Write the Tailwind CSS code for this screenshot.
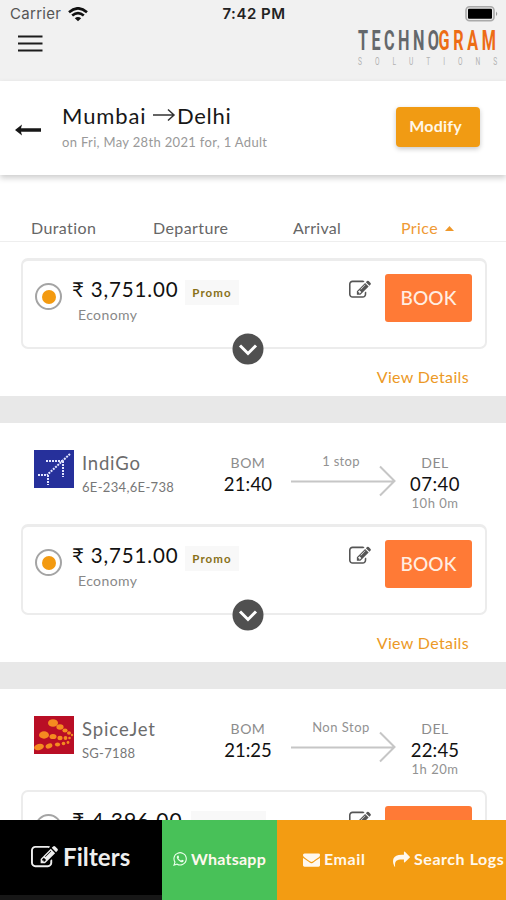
<!DOCTYPE html>
<html lang="en">
<head>
<meta charset="utf-8">
<title>Flights Mumbai to Delhi</title>
<script src="https://cdn.jsdelivr.net/npm/@tailwindcss/browser@4"></script>
</head>
<body class="w-[506px] h-[900px] overflow-hidden bg-white font-[Lato,'Noto_Sans',sans-serif]">
<svg class="hidden">
  <symbol id="edit" viewBox="0 0 1792 1792"><path d="M888 1184l116-116-152-152-116 116v56h96v96h56zm440-720q-16-16-33 1l-350 350q-17 17-1 33t33-1l350-350q17-17 1-33zm80 594v190q0 119-84.5 203.5t-203.5 84.5h-832q-119 0-203.5-84.5t-84.5-203.5v-832q0-119 84.5-203.5t203.5-84.5h832q63 0 117 25 15 7 18 23 3 17-9 29l-49 49q-14 14-32 8-23-6-45-6h-832q-66 0-113 47t-47 113v832q0 66 47 113t113 47h832q66 0 113-47t47-113v-126q0-13 9-22l64-64q15-15 35-7t20 29zm-96-738l288 288-672 672h-288v-288zm444 132l-92 92-288-288 92-92q28-28 68-28t68 28l152 152q28 28 28 68t-28 68z"/></symbol>
  <symbol id="longarrow" viewBox="0 0 106 32"><path d="M0 16.500H103M89 1.500L103.500 16L89 30.500" fill="none" stroke="#c6c6c6" stroke-width="2"/></symbol>
</svg>
<div class="flex h-[900px] flex-col">
  <main class="h-[820px] shrink-0 overflow-hidden">
    <header class="h-[81px] bg-[#f1f1f1]">
      <div class="grid h-[28px] grid-cols-3 items-center pl-[10px] pr-[8px] font-[Inter,sans-serif] text-[15px] text-[#333]">
        <div class="flex items-center gap-[6px]"><span class="w-[52px] text-[15px] text-[#555] tracking-[0.3px]">Carrier</span>
          <svg class="h-[15px] w-[20px]" viewBox="0 0 20 15" fill="none" stroke="#111" stroke-width="2.600"><path d="M1 5.200Q10-2.600 19 5.200M4.200 8.600Q10 3.600 15.800 8.600"/><path d="M10 14.300L6.800 11.200Q10 8.600 13.200 11.200Z" fill="#111" stroke="none"/></svg>
        </div>
        <span class="pt-px text-center font-semibold tracking-[0.5px] text-[#222]">7:42 PM</span>
        <svg class="ml-auto h-[16px] w-[33px]" viewBox="0 0 33 16"><rect x="1" y=".8" width="28" height="14" rx="3.500" fill="#e8e8e8" stroke="#aaa" stroke-width="1.600"/><rect x="3" y="2.800" width="24" height="10" rx="1" fill="#000"/><path d="M31 5.500q2.500 2.300 0 4.600z" fill="#999"/></svg>
      </div>
      <div class="flex justify-between pl-[18px] pr-[10px]">
        <svg class="mt-[7px] h-[18px] w-[25px]" viewBox="0 0 25 18"><path d="M0 1.500H24.500M0 8.500H24.500M0 15.500H24.500" stroke="#1c1c1c" stroke-width="2.200"/></svg>
        <svg class="h-[42px] w-[138px] overflow-visible font-[Roboto,sans-serif]" viewBox="0 0 138 42">
          <g transform="scale(.6 1)" font-size="27" font-weight="700"><text x="0" y="22" textLength="135" fill="#64686b">TECHNO</text><text x="134" y="22" textLength="96" fill="#ed6c15">GRAM</text></g>
          <g transform="scale(.6 1)"><text x="0" y="37.500" font-size="11" textLength="232" fill="#b2b2b2">SOLUTIONS</text></g>
        </svg>
      </div>
    </header>
    <section class="relative flex h-[94px] items-start bg-white pl-[15px] pr-[26px] shadow-[0_3px_6px_rgba(0,0,0,0.2)]">
      <svg class="mt-[43px] h-[12px] w-[27px]" viewBox="0 0 27 12"><path d="M0 6L7 .5L6 4.300H26V7.800H6L7 11.500Z" fill="#171717"/></svg>
      <div class="ml-[20px] pt-[20px] whitespace-nowrap">
        <h1 class="flex h-[28px] items-center text-[22px] text-[#171717]"><span class="w-[90px] tracking-[0.9px]">Mumbai</span><svg class="mr-px h-[14px] w-[24px]" viewBox="0 0 24 14" fill="none" stroke="#333" stroke-width="1.500"><path d="M1 7H22M16 1.500L22 7L16 12.500"/></svg><span class="tracking-[0.7px]">Delhi</span></h1>
        <p class="mt-[3px] text-[13px] leading-[20px] tracking-[0.33px] text-[#999]">on Fri, May 28th 2021 for, 1 Adult</p>
      </div>
      <button class="ml-auto mt-[26px] h-[40px] w-[84px] rounded-[4px] bg-[#f19b13] pb-[2px] pr-[5px] text-[16px] font-bold tracking-[0.2px] text-[#fff7e8] shadow-[0_2px_5px_rgba(0,0,0,0.22)]">Modify</button>
    </section>
    <nav class="flex h-[67px] items-end border-b border-[#eee] pb-[2px] pl-[31px] text-[16px] leading-[22px] text-[#666]">
      <span class="w-[122px] tracking-[0.4px]">Duration</span><span class="w-[140px] tracking-[0.4px]">Departure</span><span class="w-[108px] tracking-[0.3px]">Arrival</span>
      <span class="flex items-center gap-[7px] tracking-[0.4px] text-[#ef9a35]">Price <svg class="h-[5px] w-[9px]" viewBox="0 0 9 5"><path d="M4.500 0L9 5H0Z" fill="#ef982a"/></svg></span>
    </nav>

    <section class="h-[154px] pt-[16px]">
      <div class="relative ml-[21px] mr-[19px] flex h-[91px] rounded-[7px] border-2 border-t-[3px] border-[#ececec] pl-[13px] pr-[13px]">
        <span class="-ml-px mt-[22px] flex size-[27px] items-center justify-center rounded-full border-2 border-[#a4a4a4]"><i class="size-[14px] rounded-full bg-[#f39a10]"></i></span>
        <div class="ml-[10px] pt-[14px]">
          <div class="flex h-[28px] items-center"><span class="w-[112px] whitespace-nowrap text-[20.500px] font-normal tracking-[0.85px] text-[#111]">₹ 3,751.00</span><span class="ml-px mt-[6px] h-[25px] w-[54px] bg-[#f8f8f8] text-center text-[11.500px] font-bold leading-[26px] tracking-[1.1px] text-[#887018]">Promo</span></div>
          <div class="ml-[6px] text-[14px] leading-[23px] tracking-[0.4px] text-[#888]">Economy</div>
        </div>
        <svg class="ml-auto mt-[18px] h-[22px] w-[22px] fill-[#555]"><use href="#edit"/></svg>
        <button class="ml-[14px] mt-[13px] h-[48px] w-[87px] rounded-[3px] bg-[#ff7a36] text-[19px] font-medium tracking-[0.1px] text-[#ffeee2]">BOOK</button>
        <svg class="absolute left-[209px] top-[72px] size-[32px]" viewBox="0 0 32 32"><circle cx="16" cy="16" r="15.500" fill="#505050"/><path d="M8 12.500L16 20.500L24 12.500" fill="none" stroke="#fff" stroke-width="3"/></svg>
      </div>
      <a class="mt-[17px] block pr-[37px] text-right text-[16px] leading-[22px] tracking-[0.35px] text-[#ec9926]">View Details</a>
    </section>
    <div class="h-[27px] bg-[#e8e8e8]"></div>

    <section class="h-[239px]">
      <div class="flex h-[101px] pl-[34px]">
        <svg class="mt-[27px] h-[38px] w-[40px]" viewBox="0 0 40 38"><rect width="40" height="38" fill="#26309b"/><g fill="none" stroke="#e2e5ff" stroke-width="2" stroke-dasharray="2 1"><path d="M36 4L13 25M12 11H29M29 11V27M4 25H14M14 25V35"/></g></svg>
        <div class="ml-[8px] w-[120px] pt-[27px]"><div class="text-[18.500px] leading-[26px] tracking-[0.8px] text-[#6c6c6c]">IndiGo</div><div class="mt-[2px] whitespace-nowrap text-[13px] leading-[19px] tracking-[0.32px] text-[#777]">6E-234,6E-738</div></div>
        <div class="ml-[12px] w-[68px] pt-[29px] text-center"><div class="text-[14px] leading-[22px] tracking-[0.5px] text-[#8c8c8c]">BOM</div><div class="text-[18.500px] leading-[21px] tracking-[0.2px] text-[#111]">21:40</div></div>
        <div class="ml-[9px] w-[106px] pt-[28px]"><div class="pr-[6px] text-center text-[13px] leading-[20px] tracking-[0.3px] text-[#929292]">1 stop</div><svg class="-mt-[6px] h-[32px] w-[106px]"><use href="#longarrow"/></svg></div>
        <div class="ml-[3px] w-[70px] pt-[29px] text-center"><div class="text-[14px] leading-[22px] tracking-[0.5px] text-[#8c8c8c]">DEL</div><div class="text-[18.500px] leading-[21px] tracking-[0.5px] text-[#111]">07:40</div><div class="text-[13px] leading-[16px] tracking-[0.5px] text-[#929292]">10h 0m</div></div>
      </div>
      <div class="relative ml-[21px] mr-[19px] flex h-[91px] rounded-[7px] border-2 border-t-[3px] border-[#ececec] pl-[13px] pr-[13px]">
        <span class="-ml-px mt-[22px] flex size-[27px] items-center justify-center rounded-full border-2 border-[#a4a4a4]"><i class="size-[14px] rounded-full bg-[#f39a10]"></i></span>
        <div class="ml-[10px] pt-[14px]">
          <div class="flex h-[28px] items-center"><span class="w-[112px] whitespace-nowrap text-[20.500px] font-normal tracking-[0.85px] text-[#111]">₹ 3,751.00</span><span class="ml-px mt-[6px] h-[25px] w-[54px] bg-[#f8f8f8] text-center text-[11.500px] font-bold leading-[26px] tracking-[1.1px] text-[#887018]">Promo</span></div>
          <div class="ml-[6px] text-[14px] leading-[23px] tracking-[0.4px] text-[#888]">Economy</div>
        </div>
        <svg class="ml-auto mt-[18px] h-[22px] w-[22px] fill-[#555]"><use href="#edit"/></svg>
        <button class="ml-[14px] mt-[13px] h-[48px] w-[87px] rounded-[3px] bg-[#ff7a36] text-[19px] font-medium tracking-[0.1px] text-[#ffeee2]">BOOK</button>
        <svg class="absolute left-[209px] top-[72px] size-[32px]" viewBox="0 0 32 32"><circle cx="16" cy="16" r="15.500" fill="#505050"/><path d="M8 12.500L16 20.500L24 12.500" fill="none" stroke="#fff" stroke-width="3"/></svg>
      </div>
      <a class="mt-[17px] block pr-[37px] text-right text-[16px] leading-[22px] tracking-[0.35px] text-[#ec9926]">View Details</a>
    </section>
    <div class="h-[27px] bg-[#e8e8e8]"></div>

    <section class="h-[239px]">
      <div class="flex h-[101px] pl-[34px]">
        <svg class="mt-[27px] h-[38px] w-[40px]" viewBox="0 0 40 38"><rect width="40" height="38" fill="#b90e25"/><g fill="#f58b20"><ellipse cx="19" cy="7" rx="5" ry="3.800"/><ellipse cx="26" cy="11" rx="3.600" ry="2.800"/><ellipse cx="31" cy="14.500" rx="2.600" ry="2"/><ellipse cx="35" cy="17" rx="2" ry="1.700"/><circle cx="38" cy="19" r="1.200"/><ellipse cx="10" cy="19" rx="5" ry="3.700"/><ellipse cx="19" cy="20.500" rx="3.500" ry="2.600"/><ellipse cx="26" cy="22" rx="2.600" ry="2.200"/><circle cx="31.500" cy="22" r="1.900"/><circle cx="35.500" cy="22" r="1.300"/><ellipse cx="5" cy="31" rx="5" ry="3" transform="rotate(-15 5 31)"/><ellipse cx="15" cy="30" rx="3.500" ry="2.400" transform="rotate(-20 15 30)"/><ellipse cx="23.500" cy="28.500" rx="2.600" ry="2"/><circle cx="29.500" cy="27.500" r="1.800"/><circle cx="34" cy="26.500" r="1.400"/></g></svg>
        <div class="ml-[8px] w-[120px] pt-[27px]"><div class="text-[18.500px] leading-[26px] tracking-[0.9px] text-[#6c6c6c]">SpiceJet</div><div class="mt-[2px] whitespace-nowrap text-[13px] leading-[19px] tracking-[0.25px] text-[#777]">SG-7188</div></div>
        <div class="ml-[12px] w-[68px] pt-[29px] text-center"><div class="text-[14px] leading-[22px] tracking-[0.5px] text-[#8c8c8c]">BOM</div><div class="text-[18.500px] leading-[21px] tracking-[0px] text-[#111]">21:25</div></div>
        <div class="ml-[9px] w-[106px] pt-[28px]"><div class="pr-[6px] text-center text-[13px] leading-[20px] tracking-[0.5px] text-[#929292]">Non Stop</div><svg class="-mt-[6px] h-[32px] w-[106px]"><use href="#longarrow"/></svg></div>
        <div class="ml-[3px] w-[70px] pt-[29px] text-center"><div class="text-[14px] leading-[22px] tracking-[0.5px] text-[#8c8c8c]">DEL</div><div class="text-[18.500px] leading-[21px] tracking-[0.2px] text-[#111]">22:45</div><div class="text-[13px] leading-[16px] tracking-[0.5px] text-[#929292]">1h 20m</div></div>
      </div>
      <div class="ml-[21px] mr-[19px] flex h-[91px] rounded-[7px] border-2 border-[#ececec] pl-[13px] pr-[13px]">
        <span class="-ml-px mt-[22px] size-[27px] rounded-full border-2 border-[#a4a4a4]"></span>
        <div class="ml-[10px] flex h-[28px] items-center pt-[28px]"><span class="w-[117px] whitespace-nowrap text-[21px] tracking-[1.050px] text-[#111]">₹ 4,396.00</span><span class="ml-[2px] mt-[6px] h-[25px] w-[75px] bg-[#f8f8f8]"></span></div>
        <svg class="ml-auto mt-[18px] h-[22px] w-[22px] fill-[#555]"><use href="#edit"/></svg>
        <button class="ml-[14px] mt-[14px] h-[48px] w-[87px] rounded-[3px] bg-[#ff7a36]"></button>
      </div>
    </section>
  </main>
  <footer class="flex h-[80px] shrink-0 whitespace-nowrap font-bold text-[#fff8ee]">
    <div class="flex w-[162px] items-center border-b-[5px] border-[#171717] bg-black pl-[31px] text-[24px]"><svg class="mr-[5px] size-[27px] fill-[#eee]"><use href="#edit"/></svg><span class="-mt-px tracking-[0.1px] text-[#eee]">Filters</span></div>
    <div class="flex w-[115px] items-center bg-[#48c158] pb-[2px] pl-[10px] text-[16px]"><svg class="mr-[3px] size-[16px] fill-[#eaffeb]" viewBox="0 0 1792 1792"><path d="M1113 974q13 0 97.500 44t89.500 53q2 5 2 15 0 33-17 76-16 39-71 65.500t-102 26.500q-57 0-190-62-98-45-170-118t-148-185q-72-107-71-194v-8q3-91 74-158 24-22 52-22 6 0 18 1.500t19 1.500q19 0 26.500 6.500t15.500 27.500q8 20 33 88t25 75q0 21-34.500 57.500t-34.500 46.500q0 7 5 15 34 73 102 137 56 53 151 101 12 7 22 7 15 0 54-48.500t52-48.500zm-203 530q127 0 243.500-50t200.500-134 134-200.500 50-243.500-50-243.500-134-200.500-200.500-134-243.500-50-243.500 50-200.500 134-134 200.500-50 243.500q0 203 120 368l-79 233 242-77q158 104 345 104zm0-1382q153 0 292.500 60t240.500 161 161 240.500 60 292.500-60 292.500-161 240.500-240.500 161-292.500 60q-195 0-365-94l-417 134 136-405q-108-178-108-389 0-153 60-292.500t161-240.500 240.500-161 292.500-60z"/></svg><span class="tracking-[0.25px]">Whatsapp</span></div>
    <div class="flex w-[229px] items-center bg-[#f39c12] pb-[2px] pl-[26px] text-[16px]"><svg class="mr-[4px] h-[17px] w-[17px] fill-[#fff8ee]" viewBox="0 0 1792 1792"><path d="M1792 710v794q0 66-47 113t-113 47h-1472q-66 0-113-47t-47-113v-794q44 49 101 87 362 246 497 345 57 42 92.500 65.500t94.500 48 110 24.500h2q51 0 110-24.500t94.500-48 92.500-65.500q170-123 498-345 57-39 100-87zm0-294q0 79-49 151t-122 123q-376 261-468 325-10 7-42.500 31t-54 38.500-52 32.500-57.500 27-50 9h-2q-23 0-50-9t-57.500-27-52-32.500-54-38.500-42.500-31q-91-64-262-182.500t-205-142.500q-62-42-117-115.500t-55-136.500q0-78 41.500-130t118.500-52h1472q65 0 112.500 47t47.500 113z"/></svg><span class="w-[69px] tracking-[0.6px]">Email</span><svg class="mr-[4px] h-[17px] w-[17px] fill-[#fff8ee]" viewBox="0 0 1792 1792"><path d="M1792 640q0 26-19 45l-512 512q-19 19-45 19t-45-19-19-45v-256h-224q-98 0-175.500 6t-154 21.500-133 42.500-105.500 69.500-80 101-48.500 138.500-17.500 181q0 55 5 123 0 6 2.500 23.500t2.500 26.500q0 15-8.500 25t-23.500 10q-16 0-28-17-7-9-13-22t-13.500-30-10.500-24q-127-285-127-451 0-199 53-333 162-403 875-403h224v-256q0-26 19-45t45-19 45 19l512 512q19 19 19 45z"/></svg><span class="tracking-[0.55px]">Search Logs</span></div>
  </footer>
</div>
</body>
</html>
